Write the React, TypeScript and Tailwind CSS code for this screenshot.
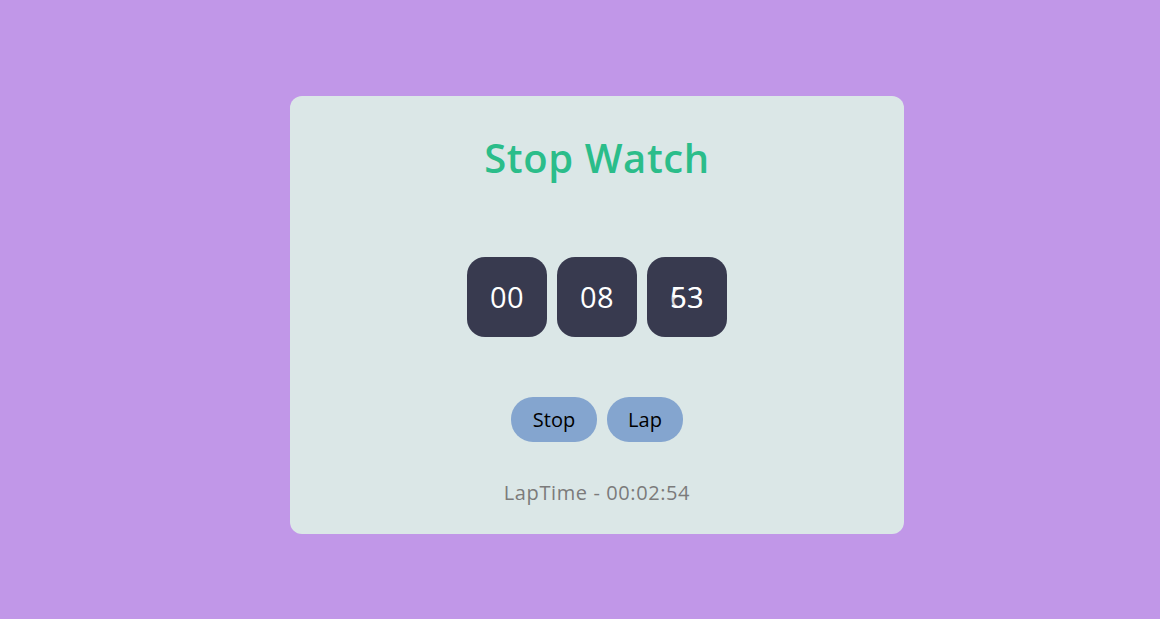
import React from "react";

const Digit = ({ children }: { children: React.ReactNode }) => (
  <div className="relative flex items-center justify-center w-[80px] h-[80px] rounded-[18px] bg-[#383a4f] text-white text-[29px] tracking-[0.5px]">
    {children}
  </div>
);

export default function App() {
  return (
    <div className="min-h-[619px] w-full bg-[#c197e8] pl-[290px] pt-[96px] font-['Open_Sans',sans-serif]">
      <div className="flex flex-col items-center w-[614px] h-[438px] rounded-[12px] bg-[#dbe7e7] pt-8">
        <h1 className="h-[60px] leading-[60px] text-[40px] font-semibold text-[#2bbd8a] tracking-[0.6px]">
          Stop Watch
        </h1>

        <div className="flex gap-[10px] mt-[69px]">
          <Digit>00</Digit>
          <Digit>08</Digit>
          <Digit>
            <span className="absolute">53</span>
            <span className="absolute opacity-80">63</span>
          </Digit>
        </div>

        <div className="flex gap-[10px] mt-[60px]">
          <button className="w-[86px] h-[45px] rounded-[22px] bg-[#84a5cf] text-[20px] text-black">
            Stop
          </button>
          <button className="w-[76px] h-[45px] rounded-[22px] bg-[#84a5cf] text-[20px] text-black">
            Lap
          </button>
        </div>

        <p className="mt-[36px] h-[30px] leading-[30px] text-[20px] text-[#7b7b7b] tracking-[0.6px]">
          LapTime - 00:02:54
        </p>
      </div>
    </div>
  );
}
